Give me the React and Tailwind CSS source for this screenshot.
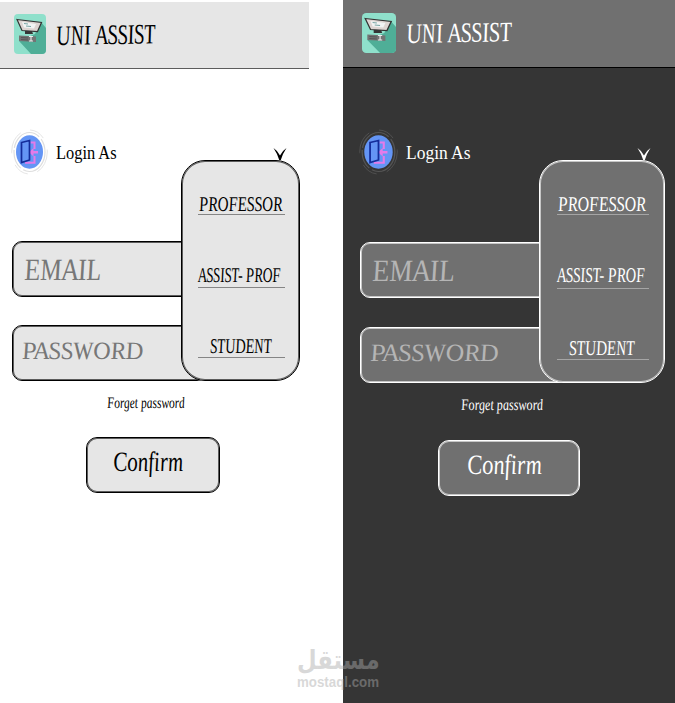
import React from "react";

const light = {
  screen: "w-[309px] h-[701px] mt-[2px] bg-white text-black",
  header: "h-[67px] bg-[#e6e6e6] border-b border-[#5c5c5c] pl-[14px] pt-[12px]",
  logo: "w-8 h-[40px]",
  title: "ml-[10px] mt-[8px] scale-x-[0.715]",
  login: "mt-[60px] ml-[11px] h-[46px]",
  loginIcon: "w-[37px] h-[46px]",
  ring: "#dedede",
  loginText: "ml-[8px] mt-[15px] scale-x-[0.91]",
  form: "mt-[66px]",
  box: "bg-[#e6e6e6] border-black inset-ring-black/60",
  field: "ml-[12px] w-[195px] h-[56px] text-[#777777]",
  email: "ml-[11px] mt-[12px] scale-x-[0.84]",
  password: "ml-[9px] mt-[12px] scale-x-[0.97]",
  gap: "h-[28px]",
  menu: "left-[181px] top-[-81px] w-[119px] h-[221px] pl-[16px] pt-px",
  line: "w-[87px] border-[#858585]",
  item1: "h-[53px] pt-[32px]",
  item2: "h-[73px] pt-[50px]",
  item3: "h-[70px] pt-[48px]",
  prof: "ml-px scale-x-[0.72]",
  assist: "scale-x-[0.65]",
  student: "ml-[12px] scale-x-[0.675]",
  arrow: "left-[273px] top-[-93px] w-[14px] h-[12px]",
  forget: "ml-[107px] mt-[14px] scale-x-[0.72]",
  confirm: "ml-[86px] mt-[26px] w-[134px] h-[56px] pl-[26px] pt-[10px]",
  confirmText: "scale-x-[0.75]",
};

const dark = {
  screen: "w-[332px] h-[703px] bg-[#353535] text-white",
  header: "h-[68px] bg-[#707070] border-b border-black pl-[19px] pt-[13px]",
  logo: "w-[34px] h-[40px]",
  title: "ml-[10px] mt-[7px] scale-x-[0.76]",
  login: "mt-[61px] ml-[16px] h-[46px]",
  loginIcon: "w-[39px] h-[46px]",
  ring: "#555555",
  loginText: "ml-[8px] mt-[15px] scale-x-[0.97]",
  form: "mt-[67px]",
  box: "bg-[#707070] border-white inset-ring-white/60",
  field: "ml-[17px] w-[210px] h-[56px] text-[#b5b5b5]",
  email: "ml-[11px] mt-[12px] scale-x-[0.9]",
  password: "ml-[9px] mt-[12px] scale-x-[1.03]",
  gap: "h-[29px]",
  menu: "left-[196px] top-[-82px] w-[126px] h-[223px] pl-[17px] pt-px",
  line: "w-[92px] border-[#a5a5a5]",
  item1: "h-[53px] pt-[32px]",
  item2: "h-[74px] pt-[50px]",
  item3: "h-[71px] pt-[49px]",
  prof: "ml-px scale-x-[0.76]",
  assist: "scale-x-[0.69]",
  student: "ml-[12px] scale-x-[0.72]",
  arrow: "left-[294px] top-[-94px] w-[14px] h-[12px]",
  forget: "ml-[118px] mt-[14px] scale-x-[0.76]",
  confirm: "ml-[95px] mt-[27px] w-[142px] h-[56px] pl-[28px] pt-[10px]",
  confirmText: "scale-x-[0.8]",
};

const script = "w-max whitespace-nowrap leading-none origin-left italic skew-x-[6deg]";

const Logo = ({ className }) => (
  <svg viewBox="0 0 32 40" preserveAspectRatio="none" className={className}>
    <rect width="32" height="40" rx="4" fill="#8fe0cb" />
    <path d="M27 8 L32 14 V36 Q32 40 28 40 H17 L5 27 L21 20 Z" fill="#4fae97" />
    <path d="M3 5.5 L27.5 8.5 L23.5 17.5 L8 16.5 Z" fill="#ddd5d2" stroke="#333" strokeWidth="1.2" />
    <path d="M8 8 L22 10 L20 14.5 L10 13.5 Z" fill="#f2f4f4" />
    <path d="M10 9.5 l4 .5 M12 12 l5 .5" stroke="#78a5a4" strokeWidth="1" />
    <path d="M11 17 h7 l1 3 h-8z" fill="#353535" />
    <path d="M5 21.5 L22 22.5 V28 L5 27 Z" fill="#737373" />
    <path d="M7 23.5 L14 24 M7 25.5 L14 26" stroke="#555" strokeWidth="1" />
    <path d="M15 22.5 h4 M17 23 v4 M15 27 h4" stroke="#eee" strokeWidth="1.1" />
  </svg>
);

const LoginIcon = ({ className, ring }) => (
  <svg viewBox="0 0 37 46" preserveAspectRatio="none" className={className} fill="none">
    <ellipse cx="18.5" cy="23" rx="15.5" ry="19.5" stroke={ring} strokeWidth="1.2" strokeDasharray="34 3 20 2" />
    <ellipse cx="18.5" cy="23" rx="17.8" ry="22" stroke={ring} strokeWidth=".8" strokeDasharray="23 10 16 12" />
    <ellipse cx="18.5" cy="23" rx="13.5" ry="16.7" fill="#6495f5" />
    <path d="M19.5 13.5 H23.5 V20 M23.5 27 V33.7 H14" stroke="#e47be9" strokeWidth="2" />
    <path d="M18 23.3 L22.5 19 V22 H27 V24.6 H22.5 V27.6 Z" fill="#e47be9" />
    <path d="M10.5 13.5 L18.5 11.5 V31 L10.5 33.5 Z" stroke="#142d9b" strokeWidth="1.7" />
  </svg>
);

const Screen = ({ t }) => {
  return (
    <div className={`shrink-0 overflow-hidden ${t.screen}`}>
      <div className={`flex items-start ${t.header}`}>
        <Logo className={`shrink-0 ${t.logo}`} />
        <h1 className={`text-[28px] -rotate-1 ${script} ${t.title}`}>UNI ASSIST</h1>
      </div>

      <div className={`flex items-start ${t.login}`}>
        <LoginIcon className={`shrink-0 ${t.loginIcon}`} ring={t.ring} />
        <div className={`text-[18px] leading-none whitespace-nowrap origin-left ${t.loginText}`}>Login As</div>
      </div>

      <div className={`relative ${t.form}`}>
        <div className={`border inset-ring rounded-[10px] ${t.box} ${t.field}`}>
          <div className={`text-[31px] ${script} ${t.email}`}>EMAIL</div>
        </div>
        <div className={t.gap}></div>
        <div className={`border inset-ring rounded-[10px] ${t.box} ${t.field}`}>
          <div className={`text-[25px] ${script} ${t.password}`}>PASSWORD</div>
        </div>

        {/* lista de roles */}
        <svg viewBox="0 0 14 12" className={`absolute ${t.arrow}`} fill="currentColor">
          <path d="M.5 0 Q5 3 7 7.5 Q9 3 13.5 0 Q10 5 7.8 12 H6.2 Q4 5 .5 0Z" />
        </svg>
        <div className={`absolute border inset-ring rounded-[24px] ${t.box} ${t.menu}`}>
          <div className={`border-b text-[21px] ${t.line} ${t.item1}`}>
            <div className={`${script} ${t.prof}`}>PROFESSOR</div>
          </div>
          <div className={`border-b text-[21px] ${t.line} ${t.item2}`}>
            <div className={`${script} ${t.assist}`}>ASSIST- PROF</div>
          </div>
          <div className={`border-b text-[21px] ${t.line} ${t.item3}`}>
            <div className={`${script} ${t.student}`}>STUDENT</div>
          </div>
        </div>
      </div>

      <div className={`text-[16px] ${script} ${t.forget}`}>Forget password</div>
      <div className={`border inset-ring rounded-[11px] ${t.box} ${t.confirm}`}>
        <div className={`text-[28px] ${script} ${t.confirmText}`}>Confirm</div>
      </div>
    </div>
  );
};

const App = () => {
  return (
    <div className="relative flex justify-between w-[675px] h-[703px] overflow-hidden bg-white font-['Liberation_Serif',serif]">
      <Screen t={light} />
      <Screen t={dark} />
      <div className="absolute left-[297px] top-[645px] w-[82px] text-[#ababab] opacity-45">
        <div className="w-max text-[26px] leading-[31px] font-bold origin-left scale-x-[0.87] font-['DejaVu_Sans',sans-serif]">مستقل</div>
        <div className="w-max text-[14px] leading-[13px] font-bold origin-left scale-x-[0.95] font-['Liberation_Sans',sans-serif]">mostaql.com</div>
      </div>
    </div>
  );
};

export default App;
